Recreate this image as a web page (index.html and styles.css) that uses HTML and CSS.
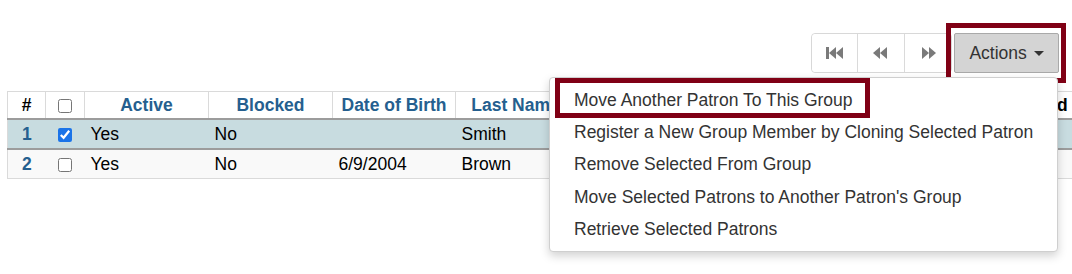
FILE: index.html
```html
<!DOCTYPE html>
<html lang="en">

<head>
    <meta charset="UTF-8" />
    <title>Patron Group</title>
    <link rel="stylesheet" href="styles.css">
</head>

<body>
    <main>
        <div class="toolbar">
            <div class="btn-group">
                <button class="btn btn-icon" title="First">
                    <svg width="20" height="14" viewBox="0 0 20 14"><rect x="1" y="1" width="3" height="12" /><polygon points="4,7 11,1 11,13" /><polygon points="11,7 18,1 18,13" /></svg>
                </button>
                <button class="btn btn-icon" title="Previous">
                    <svg width="18" height="14" viewBox="0 0 18 14"><polygon points="1,7 8,1 8,13" /><polygon points="8,7 15,1 15,13" /></svg>
                </button>
                <button class="btn btn-icon" title="Next">
                    <svg width="18" height="14" viewBox="0 0 18 14"><polygon points="3,1 10,7 3,13" /><polygon points="10,1 17,7 10,13" /></svg>
                </button>
            </div>
            <div class="highlight actions-wrap">
                <button class="btn btn-actions">Actions <span class="caret"></span></button>
            </div>
        </div>

        <table class="patrons">
            <colgroup>
                <col class="col-num" />
                <col class="col-check" />
                <col class="col-active" />
                <col class="col-blocked" />
                <col class="col-dob" />
                <col class="col-last" />
                <col class="col-first" />
                <col class="col-expired" />
            </colgroup>
            <thead>
                <tr>
                    <th class="plain-head">#</th>
                    <th class="check-cell"><input type="checkbox" /></th>
                    <th>Active</th>
                    <th>Blocked</th>
                    <th>Date of Birth</th>
                    <th>Last Name</th>
                    <th>First Name</th>
                    <th class="plain-head">Expired</th>
                </tr>
            </thead>
            <tbody>
                <tr class="selected">
                    <td class="row-num">1</td>
                    <td class="check-cell"><input type="checkbox" checked /></td>
                    <td>Yes</td>
                    <td>No</td>
                    <td></td>
                    <td>Smith</td>
                    <td>John</td>
                    <td></td>
                </tr>
                <tr>
                    <td class="row-num">2</td>
                    <td class="check-cell"><input type="checkbox" /></td>
                    <td>Yes</td>
                    <td>No</td>
                    <td>6/9/2004</td>
                    <td>Brown</td>
                    <td>Jane</td>
                    <td></td>
                </tr>
            </tbody>
        </table>

        <ul class="dropdown">
            <li class="marked"><a href="#">Move Another Patron To This Group</a></li>
            <li><a href="#">Register a New Group Member by Cloning Selected Patron</a></li>
            <li><a href="#">Remove Selected From Group</a></li>
            <li><a href="#">Move Selected Patrons to Another Patron's Group</a></li>
            <li><a href="#">Retrieve Selected Patrons</a></li>
        </ul>
    </main>
</body>

</html>
```

FILE: styles.css
```css
body {
    margin: 0;
    font-family: "Liberation Sans", Arial, sans-serif;
    font-size: 17.5px;
    color: #000;
    background: #fff;
    overflow: hidden;
}

main {
    position: relative;
    width: 1072px;
    height: 274px;
    overflow: hidden;
}

.toolbar {
    display: flex;
    justify-content: flex-end;
    align-items: flex-start;
    padding: 23px 6px 0 0;
    height: 68px;
    box-sizing: border-box;
}

.btn-group {
    display: flex;
    margin-top: 10px;
    border: 1px solid #d8d8d8;
    border-radius: 4px;
    height: 40px;
    box-sizing: border-box;
    background: #fff;
}

.btn {
    font-family: inherit;
    background: #fff;
    border: none;
    cursor: pointer;
}

.btn-icon {
    width: 47px;
    height: 38px;
    display: flex;
    align-items: center;
    justify-content: center;
    border-left: 1px solid #dadada;
    padding: 0;
}

.btn-icon:first-child {
    border-left: none;
    width: 45px;
    border-radius: 4px 0 0 4px;
}

.btn-icon svg {
    fill: #7a7a7a;
}

.highlight {
    border: 5px solid #800015;
}

.actions-wrap {
    padding: 5px 2px 5px 3px;
    margin-left: -6px;
    width: 120px;
    height: 60px;
    box-sizing: border-box;
}

.btn-actions {
    width: 105px;
    height: 40px;
    background: #d4d4d4;
    border: 1px solid #a9a9a9;
    border-radius: 2px;
    color: #333;
    font-size: 17.5px;
    padding: 0;
}

.caret {
    display: inline-block;
    width: 0;
    height: 0;
    margin-left: 2px;
    vertical-align: middle;
    border-top: 5px solid #333;
    border-left: 5px solid transparent;
    border-right: 5px solid transparent;
}

.patrons {
    margin: 23px 0 0 7px;
    border-collapse: collapse;
    table-layout: fixed;
    width: 1288px;
    font-size: 17.5px;
    border: 1px solid #dadada;
}

.col-num { width: 38px; }
.col-check { width: 39px; }
.col-active { width: 124px; }
.col-blocked { width: 124px; }
.col-dob { width: 123px; }
.col-last { width: 120px; }
.col-first { width: 200px; }
.col-expired { width: 520px; }

.patrons th,
.patrons td {
    padding: 0 6px;
    white-space: nowrap;
    overflow: hidden;
}

.patrons th {
    height: 26px;
    color: #255f8f;
    font-weight: bold;
    text-align: center;
    border: 1px solid #dadada;
    border-bottom: 2px solid #9c9c9c;
}

.patrons th.plain-head {
    color: #000;
}

.patrons td {
    height: 28px;
}

.patrons .check-cell {
    text-align: center;
    padding: 0;
}

.patrons input[type="checkbox"] {
    width: 14px;
    height: 14px;
    margin: 0;
    vertical-align: middle;
    accent-color: #1a73e8;
}

.patrons tbody tr {
    background: #f9f9f9;
    border-bottom: 1px solid #dadada;
}

.patrons tbody tr.selected {
    background: #c8dce0;
    border-bottom: 2px solid #9c9c9c;
}

.row-num {
    text-align: center;
    color: #255f8f;
    font-weight: bold;
}

.dropdown {
    position: absolute;
    left: 549px;
    top: 77px;
    width: 509px;
    margin: 0;
    padding: 6px 0 5px;
    list-style: none;
    background: #fff;
    border: 1px solid #cfcfcf;
    border-radius: 4px;
    box-shadow: 0 4px 10px rgba(0, 0, 0, 0.18);
    box-sizing: border-box;
}

.dropdown li {
    height: 32.4px;
    display: flex;
    align-items: center;
}

.dropdown li a {
    color: #333;
    text-decoration: none;
    font-size: 17.5px;
    padding-left: 24px;
}

.dropdown li.marked {
    position: relative;
}

.dropdown li.marked::after {
    content: "";
    position: absolute;
    left: 5px;
    top: -6px;
    width: 315px;
    height: 40px;
    border: 5px solid #800015;
    box-sizing: border-box;
}
```
